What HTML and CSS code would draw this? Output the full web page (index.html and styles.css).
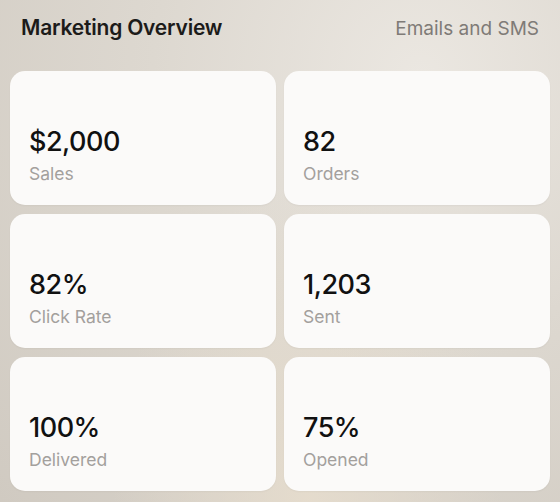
FILE: index.html
```html
<!DOCTYPE html>
<html lang="en">
<head>
    <meta charset="UTF-8">
    <meta name="viewport" content="width=device-width, initial-scale=1.0">
    <title>Marketing Overview</title>
    <link rel="stylesheet" href="styles.css">
</head>
<body>
    <div class="panel">
        <div class="header">
            <h1>Marketing Overview</h1>
            <span class="subtitle">Emails and SMS</span>
        </div>

        <div class="grid">
            <div class="card">
                <div class="value">$2,000</div>
                <div class="label">Sales</div>
            </div>
            <div class="card">
                <div class="value">82</div>
                <div class="label">Orders</div>
            </div>
            <div class="card">
                <div class="value">82%</div>
                <div class="label">Click Rate</div>
            </div>
            <div class="card">
                <div class="value">1,203</div>
                <div class="label">Sent</div>
            </div>
            <div class="card">
                <div class="value">100%</div>
                <div class="label">Delivered</div>
            </div>
            <div class="card">
                <div class="value">75%</div>
                <div class="label">Opened</div>
            </div>
        </div>
    </div>
</body>
</html>
```

FILE: styles.css
```css
html, body {
    height: 100%;
}

body {
    margin: 0;
    font-family: Inter, 'Noto Sans', sans-serif;
    background:
        radial-gradient(ellipse at 55% 100%, rgba(232, 222, 206, 0.8) 0%, rgba(232, 222, 206, 0) 45%),
        radial-gradient(ellipse at 75% 15%, #ebe7e1 0%, #ddd8d0 45%, #d0cac1 100%);
    overflow: hidden;
}

.panel {
    padding: 15px 10px 10px;
}

.header {
    display: flex;
    justify-content: space-between;
    align-items: baseline;
    padding: 0 11px;
    margin-bottom: 30px;
}

h1 {
    margin: 0;
    font-size: 21px;
    line-height: 25px;
    font-weight: 600;
    color: #1c1b1a;
    letter-spacing: -0.2px;
}

.subtitle {
    font-size: 19px;
    line-height: 25px;
    color: #7f7b77;
}

.grid {
    display: grid;
    grid-template-columns: 1fr 1fr;
    grid-auto-rows: 134px;
    column-gap: 8px;
    row-gap: 9px;
}

.card {
    background: #fbfaf9;
    border-radius: 15px;
    display: flex;
    flex-direction: column;
    justify-content: flex-end;
    padding: 0 19px 20px;
    box-shadow: 0 1px 2px rgba(0, 0, 0, 0.04);
}

.value {
    font-size: 27px;
    line-height: 32px;
    font-weight: 500;
    color: #111;
    letter-spacing: -0.5px;
}

.label {
    margin-top: 5px;
    font-size: 17.5px;
    line-height: 22px;
    color: #a3a09d;
}
```
